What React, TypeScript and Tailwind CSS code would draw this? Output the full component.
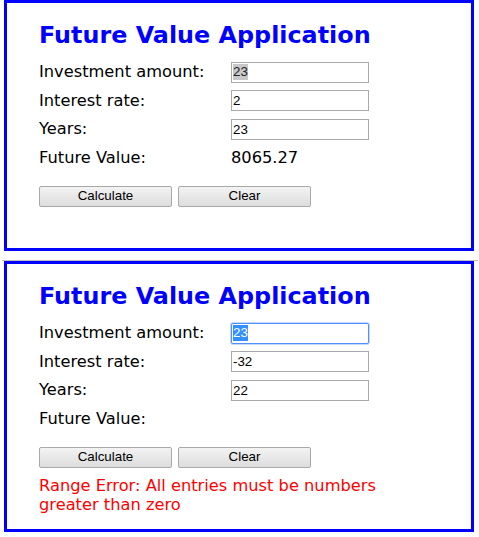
import React from "react";

const verdana = { fontFamily: '"DejaVu Sans", Verdana, sans-serif' } as const;

function FakeInput({ value, mode }: { value: string; mode?: "blur-sel" | "focus-sel" }) {
  const focused = mode === "focus-sel";
  return (
    <div
      className={
        "flex items-center h-[21px] w-[138px] px-[1px] text-[13.33px] leading-none bg-white " +
        (focused ? "border border-[#4d90fe] rounded-[2px] shadow-[0_0_0_1px_rgba(77,144,254,0.35)]" : "border border-[#a9a9a9]")
      }
      style={{ fontFamily: '"Liberation Sans", Arial, sans-serif' }}
    >
      {mode === "blur-sel" ? (
        <span className="bg-[#c8c8c8] text-[#222] px-0 leading-[16px]">{value}</span>
      ) : mode === "focus-sel" ? (
        <span className="bg-[#3390ff] text-white leading-[16px]">{value}</span>
      ) : (
        <span className="text-black">{value}</span>
      )}
    </div>
  );
}

function Row({ label, children }: { label: string; children: React.ReactNode }) {
  return (
    <div className="flex items-center h-[21px]">
      <div className="w-[192px] text-[16.25px] text-black leading-none">{label}</div>
      {children}
    </div>
  );
}

function Btn({ label }: { label: string }) {
  return (
    <div
      className="flex items-center justify-center w-[133px] h-[21px] border border-[#a9a9a9] rounded-[2px] bg-gradient-to-b from-[#f3f3f3] to-[#dddddd] text-[13.33px] text-black"
      style={{ fontFamily: '"Liberation Sans", Arial, sans-serif' }}
    >
      {label}
    </div>
  );
}

function Panel({
  amount,
  rate,
  years,
  fv,
  error,
  amountMode,
}: {
  amount: string;
  rate: string;
  years: string;
  fv: string;
  error?: boolean;
  amountMode: "blur-sel" | "focus-sel";
}) {
  return (
    <div className="ml-[4px] w-[470px] border-[3px] border-[#0000ff] bg-white pl-[32px]" style={verdana}>
      <h1 className="text-[23.85px] font-bold text-[#0000ff] leading-none pt-[21px] pb-[14px]">
        Future Value Application
      </h1>
      <div className="flex flex-col gap-[7.5px]">
        <Row label="Investment amount:">
          <FakeInput value={amount} mode={amountMode} />
        </Row>
        <Row label="Interest rate:">
          <FakeInput value={rate} />
        </Row>
        <Row label="Years:">
          <FakeInput value={years} />
        </Row>
        <Row label="Future Value:">
          <span className="text-[16.25px] text-black leading-none">{fv}</span>
        </Row>
      </div>
      <div className="flex gap-[6px] mt-[17.5px]">
        <Btn label="Calculate" />
        <Btn label="Clear" />
      </div>
      {error ? (
        <div className="text-[16.25px] text-[#ff0000] leading-[19px] mt-[8px] pb-[15px] w-[360px]">
          Range Error: All entries must be numbers greater than zero
        </div>
      ) : (
        <div className="h-[41px]" />
      )}
    </div>
  );
}

export default function App() {
  return (
    <div className="w-[479px] h-[537px] bg-white overflow-hidden">
      <Panel amount="23" rate="2" years="23" fv="8065.27" amountMode="blur-sel" />
      <div className="h-[9px]" />
      <div className="ml-[2px] w-[476px] h-px bg-[#c0c0c0]" />
      <Panel amount="23" rate="-32" years="22" fv="" error amountMode="focus-sel" />
    </div>
  );
}
